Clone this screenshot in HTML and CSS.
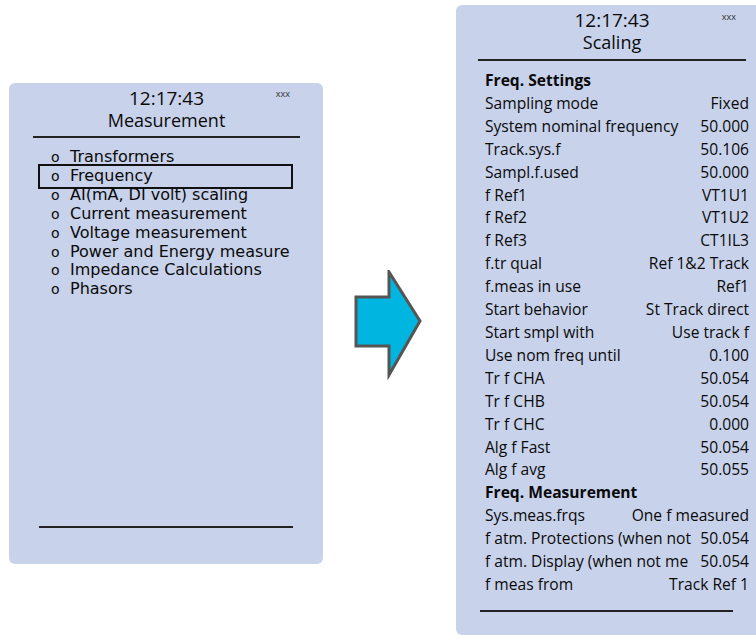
FILE: index.html
```html
<!DOCTYPE html>
<html lang="en">
<head>
<meta charset="UTF-8">
<title>Scaling</title>
<link rel="stylesheet" href="styles.css">
</head>
<body>
<div class="stage">
    <div class="panel left">
        <div class="head">
            <div class="time">12:17:43</div>
            <div class="title">Measurement</div>
            <span class="tag">xxx</span>
        </div>
        <ul class="menu">
            <li>Transformers</li>
            <li class="sel">Frequency</li>
            <li>AI(mA, DI volt) scaling</li>
            <li>Current measurement</li>
            <li>Voltage measurement</li>
            <li>Power and Energy measure</li>
            <li>Impedance Calculations</li>
            <li>Phasors</li>
        </ul>
        <div class="foot"></div>
    </div>

    <div class="arrow">
        <svg width="70" height="110" viewBox="0 0 70 110">
            <polygon points="2,27 35,27 35,2 66,51 35,105 35,76 2,76" fill="#00b5e0" stroke="#555" stroke-width="3"/>
        </svg>
    </div>

    <div class="panel right">
        <div class="head">
            <div class="time">12:17:43</div>
            <div class="title">Scaling</div>
            <span class="tag">xxx</span>
        </div>
        <div class="rows">
            <div class="grp">Freq. Settings</div>
            <div class="row"><span>Sampling mode</span><span>Fixed</span></div>
            <div class="row"><span>System nominal frequency</span><span>50.000</span></div>
            <div class="row"><span>Track.sys.f</span><span>50.106</span></div>
            <div class="row"><span>Sampl.f.used</span><span>50.000</span></div>
            <div class="row"><span>f Ref1</span><span>VT1U1</span></div>
            <div class="row"><span>f Ref2</span><span>VT1U2</span></div>
            <div class="row"><span>f Ref3</span><span>CT1IL3</span></div>
            <div class="row"><span>f.tr qual</span><span>Ref 1&amp;2 Track</span></div>
            <div class="row"><span>f.meas in use</span><span>Ref1</span></div>
            <div class="row"><span>Start behavior</span><span>St Track direct</span></div>
            <div class="row"><span>Start smpl with</span><span>Use track f</span></div>
            <div class="row"><span>Use nom freq until</span><span>0.100</span></div>
            <div class="row"><span>Tr f CHA</span><span>50.054</span></div>
            <div class="row"><span>Tr f CHB</span><span>50.054</span></div>
            <div class="row"><span>Tr f CHC</span><span>0.000</span></div>
            <div class="row"><span>Alg f Fast</span><span>50.054</span></div>
            <div class="row"><span>Alg f avg</span><span>50.055</span></div>
            <div class="grp">Freq. Measurement</div>
            <div class="row"><span>Sys.meas.frqs</span><span>One f measured</span></div>
            <div class="row"><span>f atm. Protections (when not</span><span>50.054</span></div>
            <div class="row"><span>f atm. Display (when not me</span><span>50.054</span></div>
            <div class="row"><span>f meas from</span><span>Track Ref 1</span></div>
        </div>
        <div class="foot"></div>
    </div>
</div>
</body>
</html>
```

FILE: styles.css
```css
body{
    margin: 0;
    background: #fff;
    font-family: "Open Sans", sans-serif;
    color: #0a0a0a;
    overflow: hidden;
}
.stage{
    display: flex;
    align-items: flex-start;
    width: 756px;
    height: 639px;
}
.panel{
    flex-shrink: 0;
    background: #c8d2ea;
    border-radius: 6px;
    box-sizing: border-box;
    display: flex;
    flex-direction: column;
}
.head{
    position: relative;
    text-align: center;
    line-height: 22px;
    font-size: 19px;
}
.head .title{ font-size: 18px; }
.tag{
    position: absolute;
    top: 0;
    font-size: 9px;
    line-height: 10px;
    color: #333;
}

/* left screen */
.left{
    width: 314px;
    height: 481px;
    margin: 83px 0 0 9px;
    padding: 4px 0 0;
}
.left .head{
    margin: 0 23px 0 24px;
    padding-bottom: 5px;
    border-bottom: 2px solid #222;
}
.left .tag{ right: 10px; top: 2px; }
.menu{
    list-style: none;
    margin: 10px 0 0;
    padding: 0 0 0 33px;
    font-family: "DejaVu Sans", Verdana, sans-serif;
    font-size: 16px;
    line-height: 18.9px;
}
.menu li{
    padding-left: 28px;
    position: relative;
    width: 220px;
}
.menu li::before{
    content: "o";
    position: absolute;
    left: 9px;
    font-size: 14px;
}
.menu li.sel{
    outline: 2px solid #111;
    outline-offset: 1px;
    margin-left: -1px;
    padding-left: 29px;
}
.menu li.sel::before{ left: 10px; }
.left .foot{
    margin: auto 30px 36px;
    border-top: 2px solid #222;
}

/* arrow */
.arrow{
    flex-shrink: 0;
    margin: 270px 0 0 31px;
}
.arrow svg{ display: block; }

/* right screen */
.right{
    width: 310px;
    height: 630px;
    margin: 5px 0 0 32px;
    padding: 4px 0 0;
}
.right .head{
    margin: 0 20px 0 22px;
    padding-bottom: 6px;
    border-bottom: 2px solid #222;
}
.right .tag{ right: 10px; top: 3px; }
.rows{
    padding: 8px 17px 0 29px;
    font-size: 15.6px;
    line-height: 22.9px;
}
.row{
    display: flex;
    justify-content: space-between;
    white-space: nowrap;
}
.grp{
    font-weight: bold;
}
.right .foot{
    margin: 14px 33px 0 24px;
    border-top: 2px solid #222;
}
```
